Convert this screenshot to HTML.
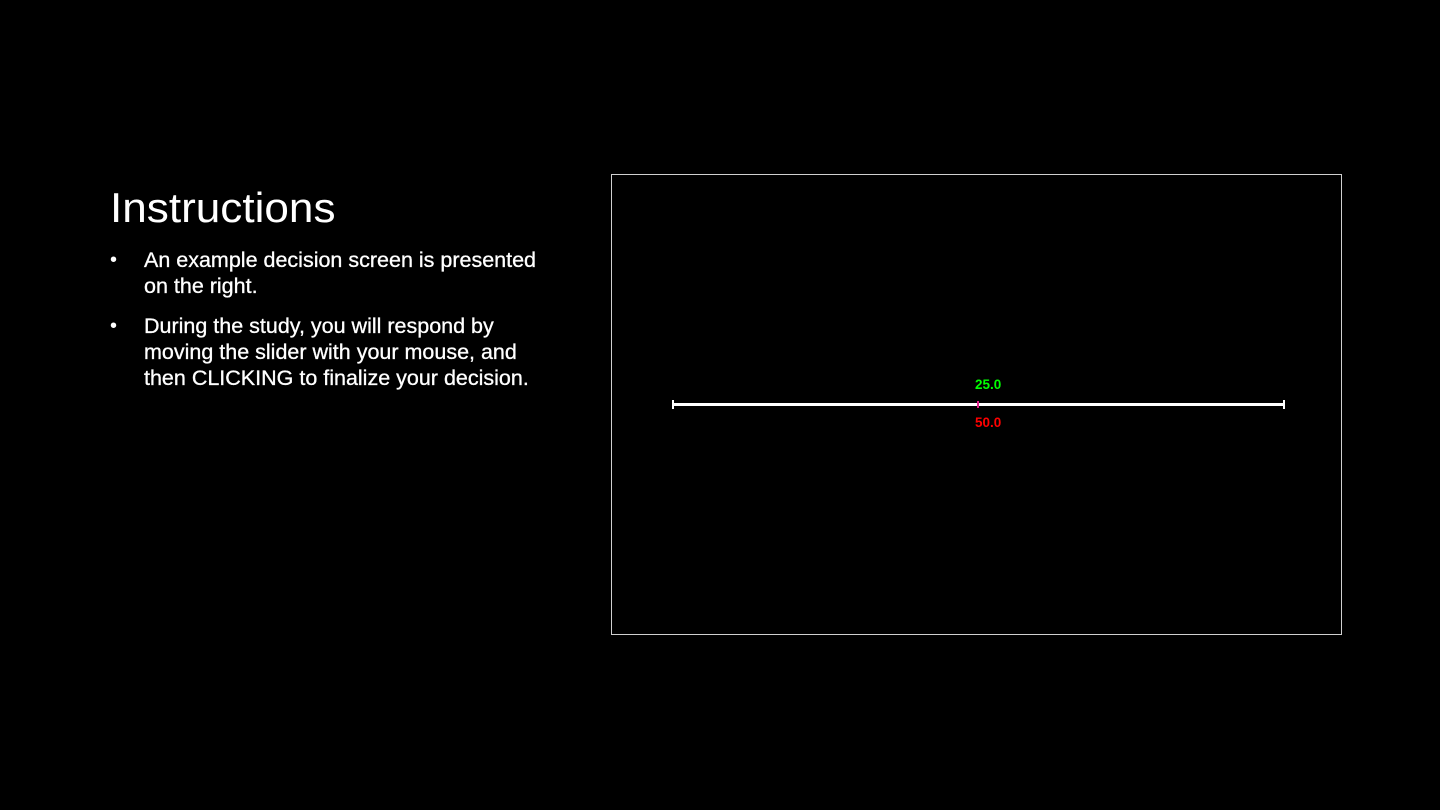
<!DOCTYPE html>
<html><head><style>
html,body{margin:0;padding:0;background:#000;}
body{width:1440px;height:810px;position:relative;overflow:hidden;font-family:"Liberation Sans",sans-serif;color:#fff;}
.t{position:absolute;left:110px;top:184px;font-size:42px;font-weight:300;white-space:nowrap;transform:scaleX(1.05);transform-origin:left;}
.l{position:absolute;left:144px;font-size:21.5px;white-space:nowrap;line-height:26px;-webkit-text-stroke:0.3px #fff;}
.b{position:absolute;left:110px;font-size:20px;line-height:26px;}
.box{position:absolute;left:611px;top:174px;width:729px;height:459px;border:1px solid #d0d0d0;}
.line{position:absolute;left:673px;top:403px;width:612px;height:3px;background:#fff;}
.tk{position:absolute;width:2px;height:9px;top:400px;background:#fff;}
.lab{position:absolute;font-size:13.5px;font-weight:bold;left:975px;}
</style></head><body>
<div class="t">Instructions</div>
<div class="b" style="top:247px">•</div>
<div class="l" style="top:247px">An example decision screen is presented</div>
<div class="l" style="top:273px">on the right.</div>
<div class="b" style="top:313px">•</div>
<div class="l" style="top:313px">During the study, you will respond by</div>
<div class="l" style="top:339px">moving the slider with your mouse, and</div>
<div class="l" style="top:365px">then CLICKING to finalize your decision.</div>
<div class="box"></div>
<div class="line"></div>
<div class="tk" style="left:672px"></div>
<div class="tk" style="left:1283px"></div>
<div class="tk" style="left:977px;background:#e0208a;height:7px;top:401px"></div>
<div class="lab" style="top:377px;color:#00ff00">25.0</div>
<div class="lab" style="top:415px;color:#ff0000">50.0</div>
</body></html>
